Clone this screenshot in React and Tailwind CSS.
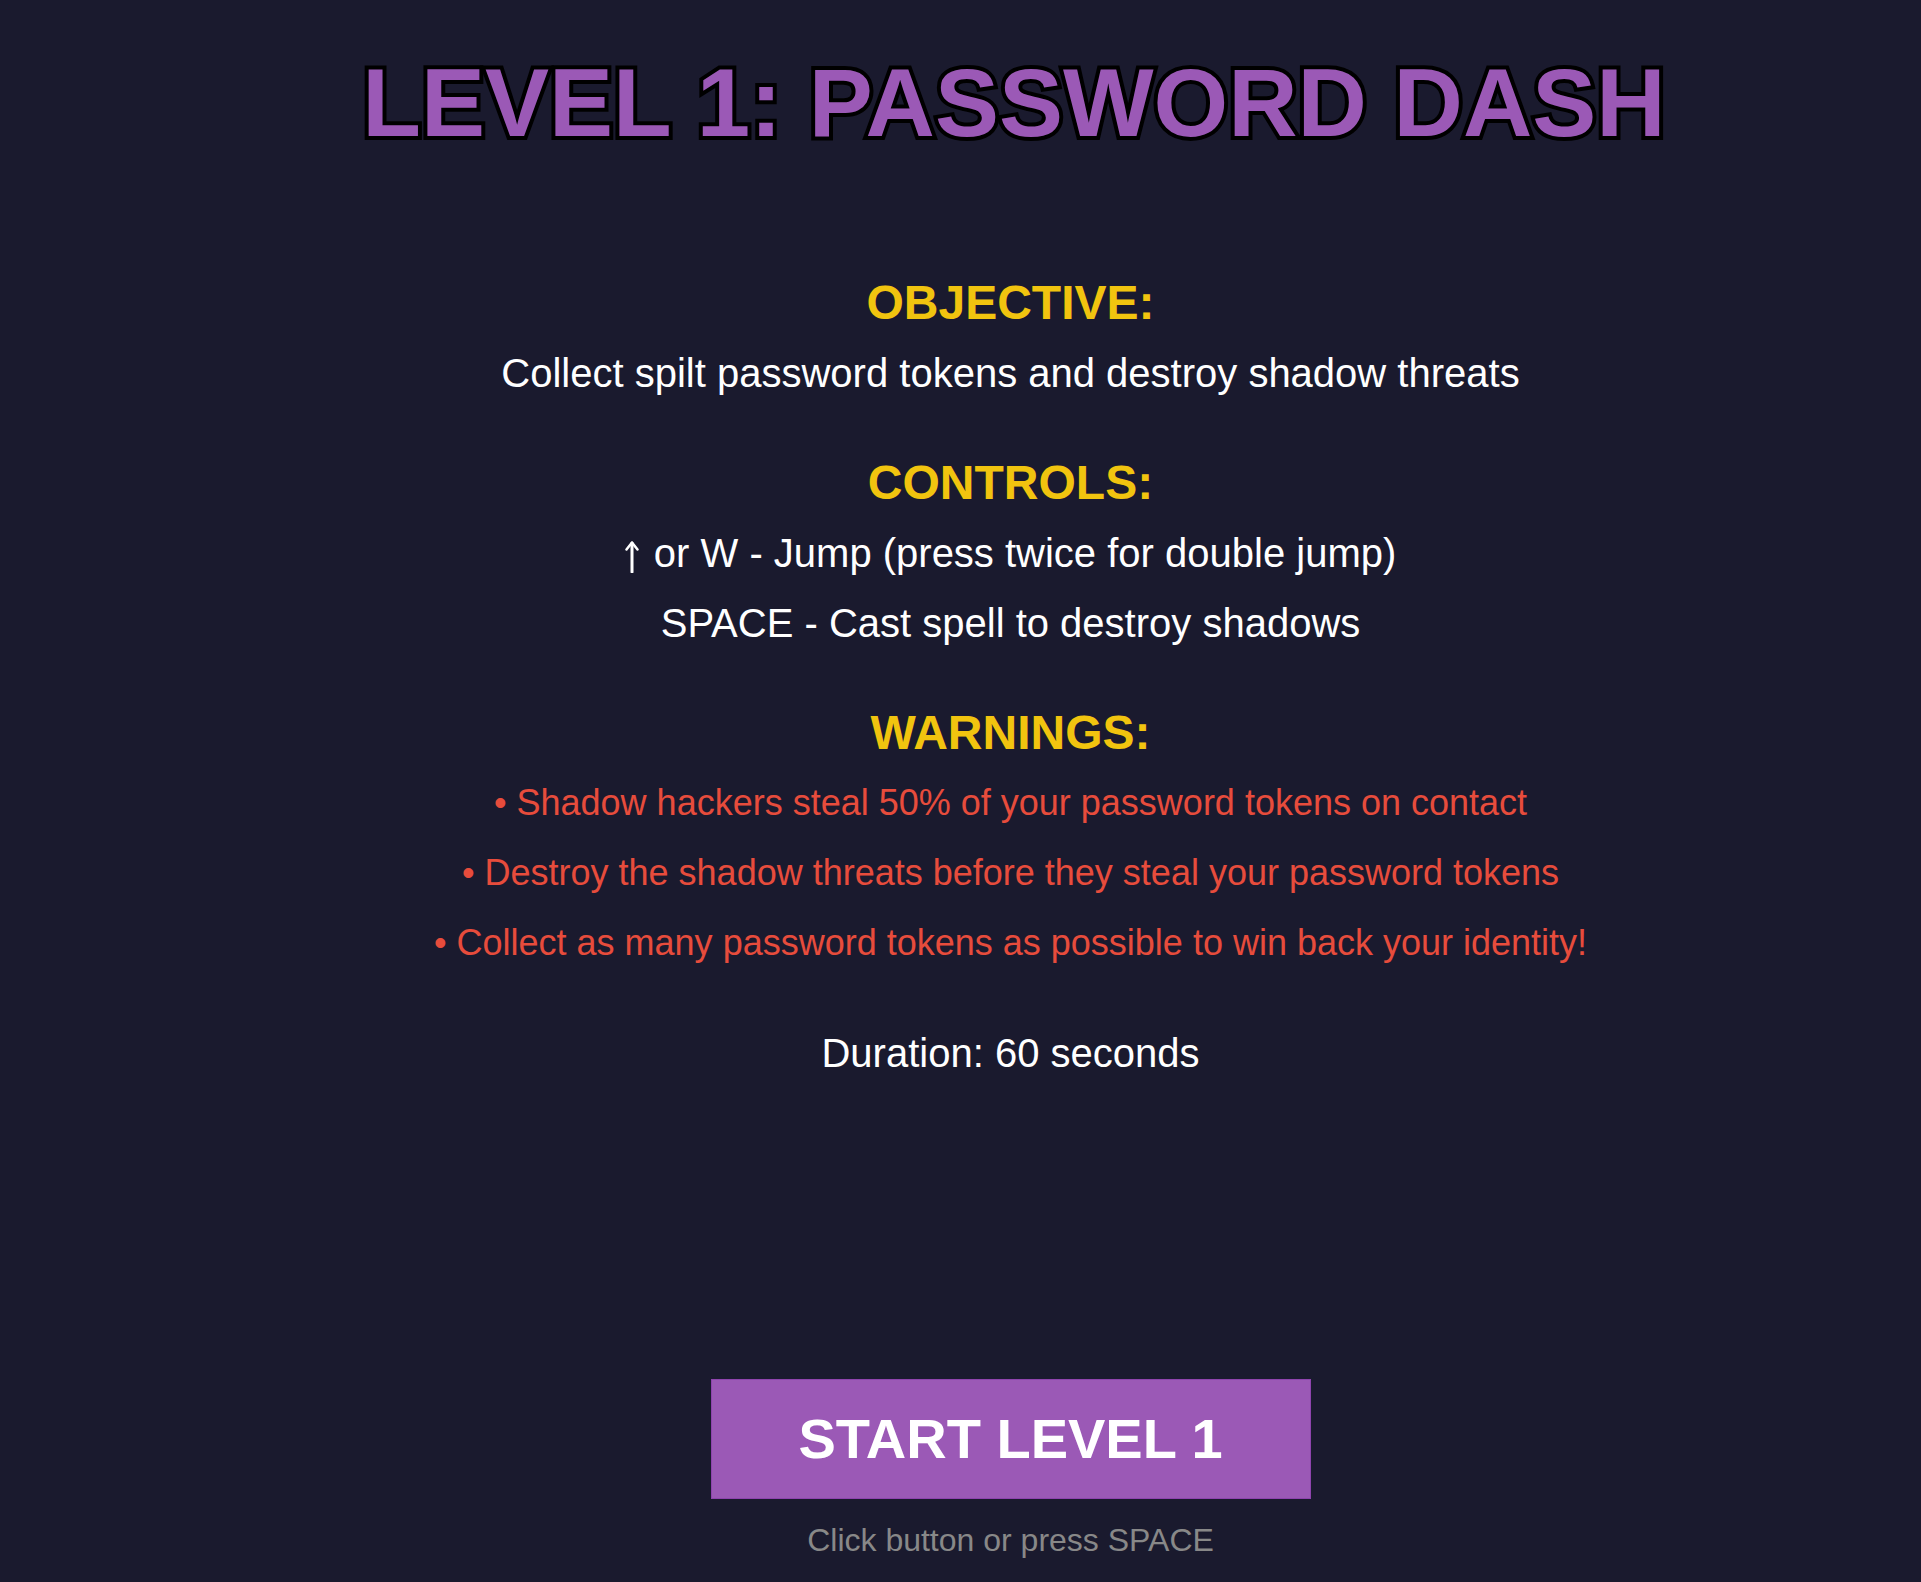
import React from "react";

// Level intro screen
const warnings = [
  "• Shadow hackers steal 50% of your password tokens on contact",
  "• Destroy the shadow threats before they steal your password tokens",
  "• Collect as many password tokens as possible to win back your identity!",
];

const Heading = ({ children, className = "" }) => (
  <p className={`text-[48px] leading-[70px] font-bold text-[#f1c40f] ${className}`}>
    {children}
  </p>
);

const Line = ({ children, className = "" }) => (
  <p className={`text-[40px] leading-[70px] text-white ${className}`}>{children}</p>
);

const UpArrow = () => (
  <svg
    width="14"
    height="33"
    viewBox="0 0 14 33"
    className="inline-block align-[-6px] mr-[4px]"
    fill="none"
    stroke="currentColor"
    strokeLinecap="round"
    strokeLinejoin="round"
  >
    <path d="M7 3v29" strokeWidth="3" />
    <path d="M1.5 9.5L7 2.5l5.5 7" strokeWidth="2.5" />
  </svg>
);

const App = () => {
  return (
    <div className="min-h-screen w-full bg-[#1a1a2e] pl-[100px] font-['Liberation_Sans',Arial,sans-serif]">
      <div className="flex flex-col items-center text-center pt-[55px]">
        <h1 className="ml-[7px] text-[96px] leading-none font-bold text-[#9b59b6] whitespace-nowrap [-webkit-text-stroke:8px_#000] [paint-order:stroke_fill] [text-shadow:0_0_3px_#000]">
          LEVEL 1: PASSWORD DASH
        </h1>

        <div className="mt-[117px] flex flex-col items-center">
          <Heading>OBJECTIVE:</Heading>
          <Line>Collect spilt password tokens and destroy shadow threats</Line>
        </div>

        <div className="mt-[40px] flex flex-col items-center">
          <Heading>CONTROLS:</Heading>
          <Line>
            <UpArrow /> or W - Jump (press twice for double jump)
          </Line>
          <Line>SPACE - Cast spell to destroy shadows</Line>
        </div>

        <div className="mt-[40px] flex flex-col items-center">
          <Heading>WARNINGS:</Heading>
          {warnings.map((w) => (
            <p key={w} className="text-[36px] leading-[70px] text-[#e74c3c] whitespace-nowrap">
              {w}
            </p>
          ))}
        </div>

        <Line className="mt-[40px]">Duration: 60 seconds</Line>

        <button className="mt-[291px] w-[600px] h-[120px] bg-[#9b59b6] border border-[#8e44ad] text-white text-[56px] font-bold leading-none">
          START LEVEL 1
        </button>
        <p className="mt-[21px] text-[32px] leading-[40px] text-[#888888]">
          Click button or press SPACE
        </p>
      </div>
    </div>
  );
};

export default App;
